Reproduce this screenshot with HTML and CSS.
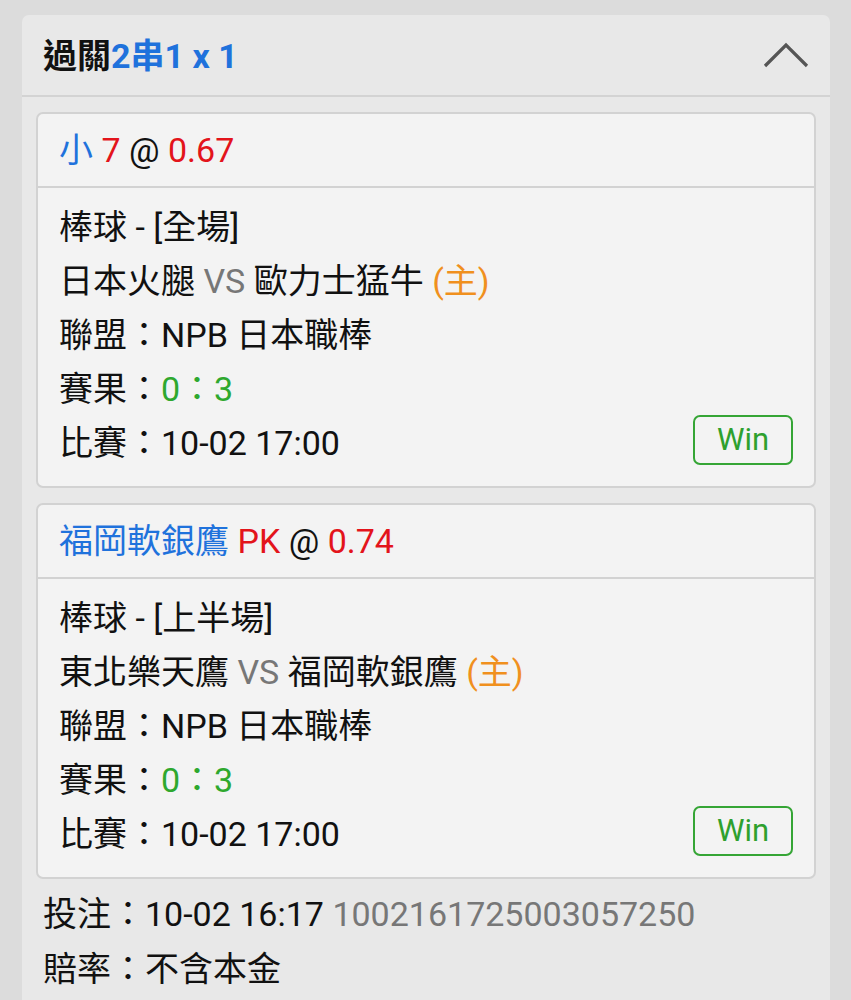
FILE: index.html
```html
<!DOCTYPE html>
<html lang="zh-Hant">
<head>
    <meta charset="UTF-8">
    <meta name="viewport" content="width=device-width, initial-scale=1.0">
    <title>過關</title>
    <link rel="stylesheet" href="styles.css">
</head>
<body>
    <div class="panel">
        <div class="panel-head">
            <div class="panel-title">過關<span class="blue">2串1 x 1</span></div>
            <svg class="chevron" width="46" height="26" viewBox="0 0 46 26">
                <polyline points="2,24 23,3 44,24" fill="none" stroke="#555" stroke-width="3.2"/>
            </svg>
        </div>

        <div class="panel-body">
            <div class="bet-card">
                <div class="bet-head">
                    <span class="blue">小</span> <span class="red">7</span> @ <span class="red">0.67</span>
                </div>
                <div class="bet-info">
                    <div class="row">棒球 - [全場]</div>
                    <div class="row">日本火腿 <span class="gray">VS</span> 歐力士猛牛 <span class="orange">(主)</span></div>
                    <div class="row">聯盟：NPB 日本職棒</div>
                    <div class="row">賽果：<span class="green">0：3</span></div>
                    <div class="row last">
                        <span>比賽：10-02 17:00</span>
                        <span class="win">Win</span>
                    </div>
                </div>
            </div>

            <div class="bet-card">
                <div class="bet-head">
                    <span class="blue">福岡軟銀鷹</span> <span class="red">PK</span> @ <span class="red">0.74</span>
                </div>
                <div class="bet-info">
                    <div class="row">棒球 - [上半場]</div>
                    <div class="row">東北樂天鷹 <span class="gray">VS</span> 福岡軟銀鷹 <span class="orange">(主)</span></div>
                    <div class="row">聯盟：NPB 日本職棒</div>
                    <div class="row">賽果：<span class="green">0：3</span></div>
                    <div class="row last">
                        <span>比賽：10-02 17:00</span>
                        <span class="win">Win</span>
                    </div>
                </div>
            </div>

            <div class="summary">
                <div class="row">投注：10-02 16:17 <span class="gray">1002161725003057250</span></div>
                <div class="row">賠率：不含本金</div>
            </div>
        </div>
    </div>
</body>
</html>
```

FILE: styles.css
```css
body {
    font-family: Roboto, "Noto Sans CJK TC", sans-serif;
    background-color: #dcdcdc;
    color: #111;
    margin: 0;
    padding: 15px 21px 0 22px;
    font-size: 34px;
}

.panel {
    background-color: #e8e8e8;
    border-radius: 7px 7px 0 0;
    min-height: 1000px;
}

.panel-head {
    display: flex;
    justify-content: space-between;
    align-items: center;
    height: 80px;
    padding: 0 21px 0 21px;
    border-bottom: 2px solid #d3d3d3;
}

.panel-title {
    font-weight: bold;
    font-size: 34px;
    margin-bottom: 4px;
}

.chevron {
    display: block;
    margin-bottom: 1px;
}

.panel-body {
    padding: 15px 14px 0 14px;
}

.bet-card {
    background-color: #f3f3f3;
    border: 2px solid #d2d2d2;
    border-radius: 7px;
    margin-bottom: 15px;
}

.bet-head {
    height: 72px;
    line-height: 72px;
    padding: 0 21px;
    border-bottom: 2px solid #d2d2d2;
}

.bet-info {
    padding: 12px 21px 16px 21px;
}

.row {
    line-height: 54px;
    white-space: nowrap;
}

.row.last {
    display: flex;
    justify-content: space-between;
    align-items: center;
}

.win {
    display: inline-block;
    width: 96px;
    height: 46px;
    line-height: 46px;
    text-align: center;
    border: 2px solid #35a535;
    border-radius: 7px;
    color: #2ea02e;
    font-size: 31px;
    margin-top: -6px;
}

.summary {
    padding: 0 7px;
    margin-top: -7px;
}

.summary .row {
    line-height: 55px;
}

.blue {
    color: #1f72dc;
}

.red {
    color: #e3141b;
}

.gray {
    color: #777;
}

.orange {
    color: #f0901e;
}

.green {
    color: #2ea82e;
}
```
